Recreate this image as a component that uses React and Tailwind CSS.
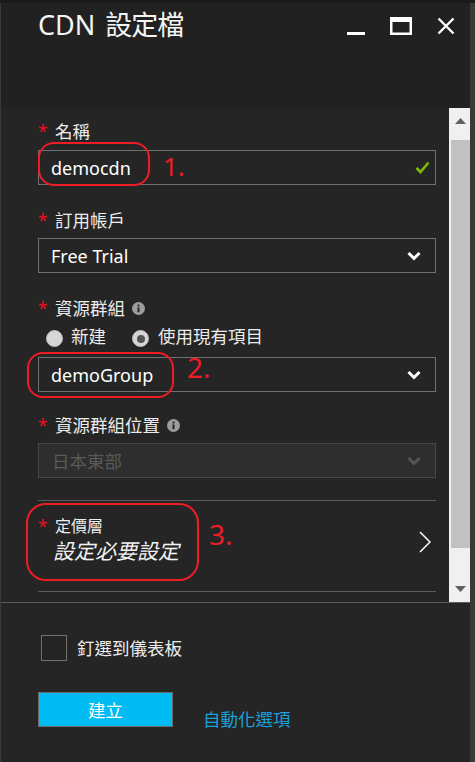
import React from "react";

function Chevron({ color }) {
  return (
    <svg width="14" height="10" viewBox="0 0 14 10">
      <path d="M1.5 2 L7 7.5 L12.5 2" fill="none" stroke={color} strokeWidth="3" />
    </svg>
  );
}

function Info() {
  return (
    <svg width="13" height="13" viewBox="0 0 13 13" className="ml-[7px]">
      <circle cx="6.5" cy="6.5" r="6.5" fill="#9c9c9c" />
      <circle cx="6.5" cy="3.6" r="1.1" fill="#252525" />
      <rect x="5.5" y="5.4" width="2" height="4.8" fill="#252525" />
    </svg>
  );
}

function Label({ text, info, className }) {
  return (
    <div className={"flex items-center h-[20px] leading-[20px] text-[17.5px] text-[#ececec] " + (className || "")}>
      <span className="w-[17px] text-[#e81123]">*</span>
      <span>{text}</span>
      {info && <Info />}
    </div>
  );
}

export default function App() {
  return (
    <div className="relative w-[475px] h-[762px] overflow-hidden flex flex-col bg-[#252525] [font-family:'Noto_Sans','Noto_Sans_CJK_TC',sans-serif]">
      <div className="h-[3px] bg-[#1b1b1b] shrink-0" />
      <div className="flex flex-1 min-h-0">
        <div className="w-px bg-[#3a3a3a] shrink-0" />
        <div className="flex-1 flex flex-col min-w-0">
          {/* header */}
          <div className="h-[105px] bg-[#212121] flex shrink-0">
            <div className="pl-[37px] pt-[4px] h-[36px] leading-[36px] text-[27px] text-[#f5f5f5] whitespace-nowrap">
              <span>CDN</span>
              <span className="ml-[10px] tracking-[-1px]">設定檔</span>
            </div>
            <div className="ml-auto flex items-start gap-[25px] pt-[14px] pr-[15px]">
              <svg width="18" height="18" viewBox="0 0 18 18">
                <rect x="0" y="15" width="18" height="3" fill="#ffffff" />
              </svg>
              <svg width="22" height="18" viewBox="0 0 22 18">
                <rect x="1.25" y="2.5" width="19.5" height="14.25" fill="none" stroke="#ffffff" strokeWidth="2.5" />
                <rect x="0" y="0" width="22" height="5" fill="#ffffff" />
              </svg>
              <svg width="18" height="18" viewBox="0 0 18 18">
                <path d="M1.5 1.5 L16.5 16.5 M16.5 1.5 L1.5 16.5" stroke="#ffffff" strokeWidth="2.4" />
              </svg>
            </div>
          </div>

          {/* scroll area */}
          <div className="h-[495px] flex border-b border-[#5c5c5c] shrink-0">
            <div className="flex-1 overflow-hidden pl-[37px] pr-[13px] pt-[13px]">
              <Label text="名稱" />
              <div className="mt-[9px] h-[35px] border border-[#707070] flex items-center justify-between pl-[12px] pr-[5px] text-[18px] leading-[22px] text-white">
                <span>democdn</span>
                <svg width="15" height="13" viewBox="0 0 15 13">
                  <path d="M1.5 7 L5.5 11 L13.5 1.5" fill="none" stroke="#7fba00" strokeWidth="2.6" />
                </svg>
              </div>

              <Label text="訂用帳戶" className="mt-[25px]" />
              <div className="mt-[8px] h-[35px] border border-[#707070] flex items-center justify-between pl-[12px] pr-[14px] text-[18px] leading-[22px] text-white">
                <span>Free Trial</span>
                <Chevron color="#ffffff" />
              </div>

              <Label text="資源群組" info className="mt-[25px]" />
              <div className="mt-[8px] h-[20px] flex items-start pl-[8px] text-[17.5px] leading-[20px] text-[#ececec]">
                <span className="mt-[4px] w-[17px] h-[17px] rounded-full bg-[#d6d6d6] border border-[#bdbdbd]" />
                <span className="ml-[8px]">新建</span>
                <span className="ml-[26px] mt-[4px] w-[17px] h-[17px] rounded-full bg-[#d6d6d6] border border-[#bdbdbd] flex items-center justify-center">
                  <span className="w-[8px] h-[8px] rounded-full bg-[#555555]" />
                </span>
                <span className="ml-[9px]">使用現有項目</span>
              </div>
              <div className="mt-[11px] h-[35px] border border-[#707070] flex items-center justify-between pl-[12px] pr-[14px] text-[18px] leading-[22px] text-white">
                <span>demoGroup</span>
                <Chevron color="#ffffff" />
              </div>

              <Label text="資源群組位置" info className="mt-[23px]" />
              <div className="mt-[8px] h-[35px] border border-[#474747] bg-[#2e2e2e] flex items-center justify-between pl-[13px] pr-[14px] text-[17.5px] leading-[22px] text-[#5a5a5a]">
                <span>日本東部</span>
                <Chevron color="#555555" />
              </div>

              <div className="mt-[22px] h-px bg-[#5c5c5c]" />
              <div className="h-[90px] flex justify-between pr-[5px]">
                <div className="pt-[15px]">
                  <div className="flex h-[20px] leading-[20px] text-[16px] text-[#ececec]">
                    <span className="w-[17px] text-[#e81123] text-[17.5px]">*</span>
                    <span>定價層</span>
                  </div>
                  <div className="mt-[2px] pl-[15px] h-[26px] leading-[26px] text-[21px] italic text-[#f2f2f2] whitespace-nowrap">
                    設定必要設定
                  </div>
                </div>
                <svg width="12" height="22" viewBox="0 0 12 22" className="mt-[30px]">
                  <path d="M1 1 L11 11 L1 21" fill="none" stroke="#ffffff" strokeWidth="1.5" />
                </svg>
              </div>
              <div className="h-px bg-[#5c5c5c]" />
            </div>

            {/* scrollbar */}
            <div className="w-[21px] bg-[#f0f0f0] flex flex-col pl-[2px] shrink-0">
              <div className="h-[32px] flex justify-center pt-[10px]">
                <svg width="11" height="6" viewBox="0 0 11 6">
                  <path d="M5.5 0 L11 6 L0 6 Z" fill="#606060" />
                </svg>
              </div>
              <div className="h-[408px] bg-[#c1c1c1]" />
              <div className="flex-1 flex justify-center items-end pb-[10px]">
                <svg width="11" height="6" viewBox="0 0 11 6">
                  <path d="M0 0 L11 0 L5.5 6 Z" fill="#606060" />
                </svg>
              </div>
            </div>
          </div>

          {/* footer */}
          <div className="flex-1 pt-[32px]">
            <div className="flex items-center ml-[40px] h-[26px]">
              <div className="w-[26px] h-[26px] border border-[#707070]" />
              <span className="ml-[10px] text-[17.5px] leading-[20px] text-[#ececec]">釘選到儀表板</span>
            </div>
            <div className="mt-[31px] ml-[37px] flex items-end">
              <div className="w-[135px] h-[35px] bg-[#00bcf2] border border-[#6b6b6b] flex items-center justify-center text-[17.5px] leading-[20px] text-white">
                建立
              </div>
              <span className="ml-[30px] -mb-[2px] text-[17.5px] leading-[20px] text-[#1aa0d8]">自動化選項</span>
            </div>
          </div>
        </div>
        <div className="w-[5px] bg-[#3a3a3a] shrink-0" />
      </div>

      {/* annotations */}
      <div className="absolute left-[38px] top-[142px] w-[112px] h-[44px] border-2 border-[#ee1c25] rounded-[16px]" />
      <div className="absolute left-[163px] top-[151px] text-[26px] leading-[30px] text-[#ee1c25]">1.</div>
      <div className="absolute left-[27px] top-[352px] w-[147px] h-[46px] border-2 border-[#ee1c25] rounded-[16px]" />
      <div className="absolute left-[187px] top-[351px] text-[28px] leading-[32px] text-[#ee1c25]">2.</div>
      <div className="absolute left-[26px] top-[503px] w-[173px] h-[78px] border-2 border-[#ee1c25] rounded-[20px]" />
      <div className="absolute left-[209px] top-[518px] text-[28px] leading-[32px] text-[#ee1c25]">3.</div>
    </div>
  );
}
